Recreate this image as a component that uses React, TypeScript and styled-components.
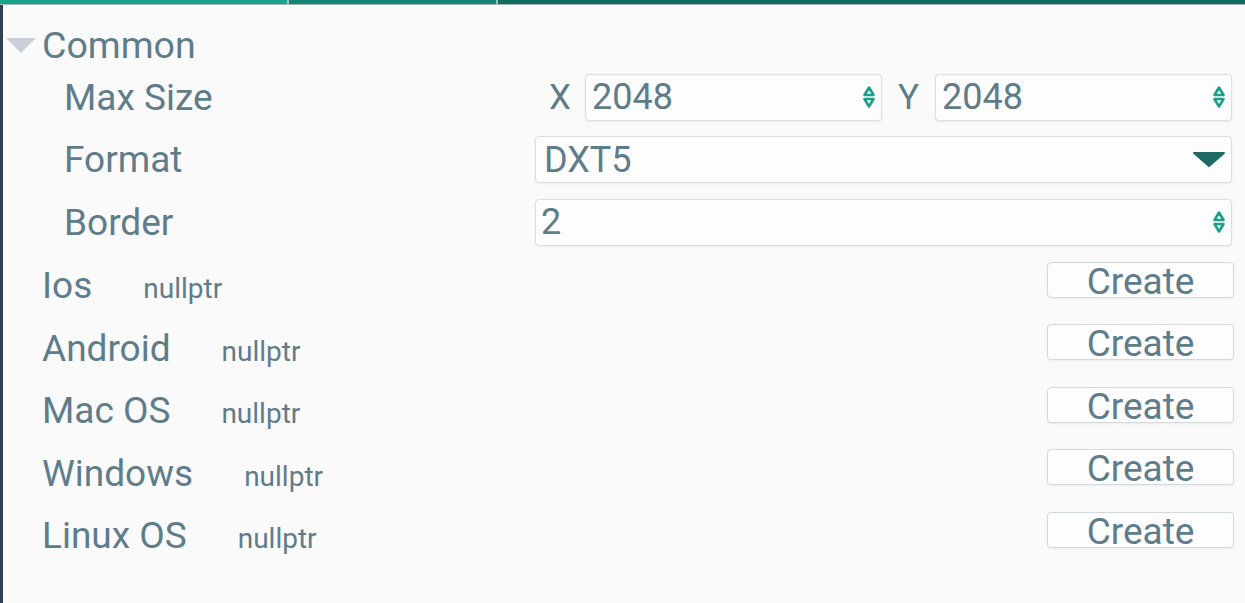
import React from "react";
import styled, { createGlobalStyle } from "styled-components";

const GlobalStyle = createGlobalStyle`
  html, body {
    margin: 0;
    padding: 0;
    background: #fafafa;
  }
  body {
    font-family: Roboto, "Noto Sans", sans-serif;
    color: #5f7c8a;
  }
`;

const TEXT = "#5f7c8a";

const Page = styled.div`
  width: 1245px;
  height: 603px;
  display: flex;
  flex-direction: column;
  overflow: hidden;
  background: #fafafa;
`;

const TabStrip = styled.div`
  display: flex;
  flex: 0 0 auto;
  height: 4px;
  border-bottom: 1px solid #a3b5b9;
`;

const TabSegment = styled.div<{ $width?: number; $color: string }>`
  flex: ${({ $width }) => ($width ? `0 0 ${$width}px` : "1 1 auto")};
  background: ${({ $color }) => $color};

  & + & {
    border-left: 2px solid #8fc4ba;
  }
`;

const Panel = styled.section`
  flex: 1 1 auto;
  display: flex;
  flex-direction: column;
  border-left: 3px solid #2f4050;
  padding-right: 11px;
`;

const TreeHeader = styled.div`
  box-sizing: border-box;
  height: 61px;
  padding: 20px 0 0 3px;
  display: flex;
  align-items: center;
  gap: 6px;
`;

const Heading = styled.span`
  font-size: 37.5px;
  line-height: 1;
  color: ${TEXT};
`;

const FormRow = styled.div`
  height: 62.5px;
  display: flex;
  align-items: center;
  padding-left: 61px;
  margin-right: 2px;
`;

const Label = styled.span`
  flex: 0 0 471px;
  font-size: 37px;
  line-height: 1;
  color: ${TEXT};
`;

const Controls = styled.div<{ $split?: boolean }>`
  flex: 1 1 auto;
  display: grid;
  grid-template-columns: ${({ $split }) => ($split ? "50px 1fr 53px 1fr" : "1fr")};
  align-items: center;
`;

const AxisLabel = styled.span`
  text-align: center;
  font-size: 35px;
  line-height: 1;
  color: ${TEXT};
`;

const Box = styled.div<{ $pad?: number }>`
  box-sizing: border-box;
  height: 47px;
  display: flex;
  align-items: center;
  justify-content: space-between;
  padding: 0 6px 0 ${({ $pad }) => $pad ?? 6}px;
  background: #fdfdfd;
  border: 1px solid #d9dfe3;
  border-radius: 4px;
  box-shadow: 0 1px 2px rgba(40, 60, 70, 0.08);
  font-size: 36px;
  line-height: 1;
  color: ${TEXT};
`;

const PlatformRow = styled.div`
  height: 62.5px;
  display: flex;
  align-items: center;
  justify-content: space-between;
  padding-left: 39px;
`;

const NameGroup = styled.div`
  display: flex;
  align-items: baseline;
  gap: 51px;
  margin-top: 2px;
`;

const PlatformName = styled.span`
  font-size: 37px;
  line-height: 1;
  color: ${TEXT};
`;

const NullTag = styled.span`
  font-size: 28px;
  line-height: 1;
  color: ${TEXT};
`;

const CreateButton = styled.button`
  box-sizing: border-box;
  width: 187px;
  height: 36px;
  margin-bottom: 10px;
  padding: 3px 0 0;
  display: flex;
  align-items: center;
  justify-content: center;
  background: #fdfdfd;
  border: 1px solid #d3d9de;
  border-radius: 4px;
  box-shadow: 0 1px 2px rgba(40, 60, 70, 0.08);
  font-family: Roboto, "Noto Sans", sans-serif;
  font-size: 37px;
  line-height: 1;
  color: ${TEXT};
`;

const TreeArrow = () => (
  <svg width="30" height="16" viewBox="0 0 30 16">
    <polygon points="0,0 30,0 15,15" fill="#c9d0d7" />
  </svg>
);

const Spinner = () => (
  <svg width="12" height="22" viewBox="0 0 12 22">
    <polygon points="6,1.5 10.5,9 1.5,9" fill="#ffffff" stroke="#1f9e89" strokeWidth="2.6" strokeLinejoin="round" />
    <polygon points="1.5,13 10.5,13 6,20.5" fill="#ffffff" stroke="#1f9e89" strokeWidth="2.6" strokeLinejoin="round" />
  </svg>
);

const DropArrow = () => (
  <svg width="32" height="15" viewBox="0 0 32 15">
    <polygon points="1,1 31,1 16,14" fill="#1f6b64" stroke="#1f6b64" strokeWidth="2" strokeLinejoin="round" />
  </svg>
);

const platforms = [
  { name: "Ios" },
  { name: "Android" },
  { name: "Mac OS" },
  { name: "Windows" },
  { name: "Linux OS" },
];

const App = () => (
  <Page>
    <GlobalStyle />
    <TabStrip>
      <TabSegment $width={287} $color="#17a48a" />
      <TabSegment $width={207} $color="#138576" />
      <TabSegment $color="#0e6c60" />
    </TabStrip>
    <Panel>
      <TreeHeader>
        <TreeArrow />
        <Heading>Common</Heading>
      </TreeHeader>

      <FormRow>
        <Label>Max Size</Label>
        <Controls $split>
          <AxisLabel>X</AxisLabel>
          <Box>
            <span>2048</span>
            <Spinner />
          </Box>
          <AxisLabel>Y</AxisLabel>
          <Box>
            <span>2048</span>
            <Spinner />
          </Box>
        </Controls>
      </FormRow>

      <FormRow>
        <Label>Format</Label>
        <Controls>
          <Box $pad={8}>
            <span>DXT5</span>
            <DropArrow />
          </Box>
        </Controls>
      </FormRow>

      <FormRow>
        <Label>Border</Label>
        <Controls>
          <Box $pad={5}>
            <span>2</span>
            <Spinner />
          </Box>
        </Controls>
      </FormRow>

      {platforms.map((p) => (
        <PlatformRow key={p.name}>
          <NameGroup>
            <PlatformName>{p.name}</PlatformName>
            <NullTag>nullptr</NullTag>
          </NameGroup>
          <CreateButton>Create</CreateButton>
        </PlatformRow>
      ))}
    </Panel>
  </Page>
);

export default App;
